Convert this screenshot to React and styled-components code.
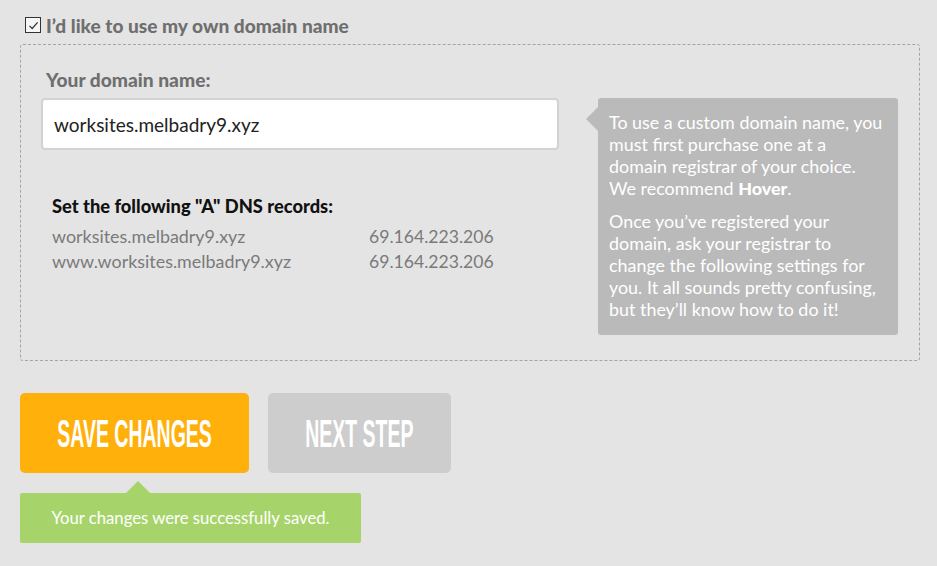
import styled, { createGlobalStyle } from "styled-components";

const Global = createGlobalStyle`
  html, body {
    margin: 0;
    padding: 0;
    background: #e4e4e4;
  }
  body {
    font-family: Lato, "Open Sans", sans-serif;
  }
`;

const Page = styled.div`
  padding: 14px 18px 20px 20px;
  width: 900px;
`;

const CheckRow = styled.label`
  display: flex;
  align-items: center;
  gap: 5px;
  margin-left: 5px;
  height: 22px;
  font-size: 19.1px;
  font-weight: 900;
  color: #6f6f6f;
`;

const Box = styled.span`
  width: 14px;
  height: 14px;
  border: 1px solid #333;
  background: #f6f6f6;
  display: flex;
  align-items: center;
  justify-content: center;
`;

const Panel = styled.div`
  margin-top: 8px;
  border: 1px dashed #a4a4a4;
  border-radius: 3px;
  height: 315px;
  padding: 0 21px 0 20px;
  display: flex;
  justify-content: space-between;
`;

const Left = styled.div`
  width: 518px;
`;

const FieldLabel = styled.div`
  margin: 24px 0 0 5px;
  font-size: 19.2px;
  font-weight: 900;
  color: #6f6f6f;
  line-height: 22px;
`;

const Input = styled.div`
  margin-top: 7px;
  height: 48px;
  border: 2px solid #d2d2d2;
  border-radius: 4px;
  background: #fff;
  display: flex;
  align-items: center;
  padding-left: 11px;
  font-size: 19px;
  color: #222;
`;

const Records = styled.div`
  margin: 45px 0 0 11px;
`;

const RecordsTitle = styled.div`
  font-size: 18.3px;
  font-weight: 900;
  color: #111;
  line-height: 22px;
  margin-bottom: 7px;
`;

const RecordRow = styled.div`
  display: grid;
  grid-template-columns: 317px auto;
  font-size: 17.9px;
  color: #7a7a7a;
  line-height: 25px;

  span + span {
    font-size: 17.6px;
  }
`;

const Tip = styled.div`
  position: relative;
  margin-top: 53px;
  width: 276px;
  height: 211px;
  padding: 13px 13px 13px 11px;
  background: #bababa;
  border-radius: 3px;
  color: #fff;
  font-size: 17.9px;
  line-height: 22px;

  &::before {
    content: "";
    position: absolute;
    left: -12px;
    top: 9px;
    border-style: solid;
    border-width: 12px 12px 12px 0;
    border-color: transparent #bababa transparent transparent;
  }

  p {
    margin: 0 0 11px;
  }
  b {
    font-weight: 900;
  }
`;

const Buttons = styled.div`
  display: flex;
  gap: 19px;
  margin-top: 32px;
`;

const Button = styled.div`
  width: ${({ $w }) => $w}px;
  height: 80px;
  border-radius: 5px;
  background: ${({ $bg }) => $bg};
  display: flex;
  align-items: center;
  justify-content: center;
  color: #fff;
  overflow: hidden;
`;

const ButtonText = styled.span`
  display: inline-block;
  font-family: "Liberation Sans Narrow", "Liberation Sans", sans-serif;
  font-weight: 700;
  font-size: 39px;
  transform: scaleX(0.5);
  white-space: nowrap;
  padding-top: 1px;
`;

const Notice = styled.div`
  position: relative;
  margin-top: 20px;
  width: 341px;
  height: 50px;
  background: #a6d46a;
  border-radius: 2px;
  color: #fff;
  font-size: 16.7px;
  display: flex;
  align-items: center;
  justify-content: center;

  &::before {
    content: "";
    position: absolute;
    top: -12px;
    left: 106px;
    border-style: solid;
    border-width: 0 12px 12px 12px;
    border-color: transparent transparent #a6d46a transparent;
  }
`;

export default function App() {
  return (
    <Page>
      <Global />
      <CheckRow>
        <Box>
          <svg width="11" height="11" viewBox="0 0 11 11">
            <path d="M1.5 5.8 L4.2 8.5 L9.6 2.4" fill="none" stroke="#333" strokeWidth="1.2" />
          </svg>
        </Box>
        I’d like to use my own domain name
      </CheckRow>
      <Panel>
        <Left>
          <FieldLabel>Your domain name:</FieldLabel>
          <Input>worksites.melbadry9.xyz</Input>
          <Records>
            <RecordsTitle>Set the following "A" DNS records:</RecordsTitle>
            <RecordRow>
              <span>worksites.melbadry9.xyz</span>
              <span>69.164.223.206</span>
            </RecordRow>
            <RecordRow>
              <span>www.worksites.melbadry9.xyz</span>
              <span>69.164.223.206</span>
            </RecordRow>
          </Records>
        </Left>
        <Tip>
          <p>
            To use a custom domain name, you must first purchase one at a domain registrar of your
            choice. We recommend <b>Hover</b>.
          </p>
          <p>
            Once you’ve registered your domain, ask your registrar to change the following settings
            for you. It all sounds pretty confusing, but they’ll know how to do it!
          </p>
        </Tip>
      </Panel>
      <Buttons>
        <Button $w={229} $bg="#ffb00b">
          <ButtonText>SAVE CHANGES</ButtonText>
        </Button>
        <Button $w={183} $bg="#cdcdcd">
          <ButtonText>NEXT STEP</ButtonText>
        </Button>
      </Buttons>
      <Notice>Your changes were successfully saved.</Notice>
    </Page>
  );
}
